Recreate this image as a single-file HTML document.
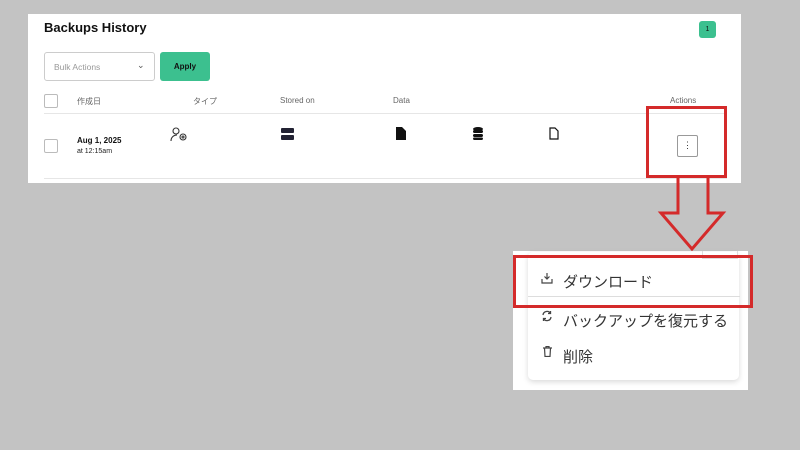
<!DOCTYPE html>
<html><head><meta charset="utf-8"><style>
*{margin:0;padding:0;box-sizing:border-box}
body{width:800px;height:450px;background:#c3c3c3;position:relative;overflow:hidden;font-family:"Liberation Sans","Noto Sans CJK JP",sans-serif}
.a{position:absolute}
.panel{left:28px;top:14px;width:713px;height:169px;background:#fff}
.cb{width:14px;height:14px;border:1px solid #bbb;border-radius:2px;background:#fff}
.hd{font-size:8px;color:#666}
</style></head><body>
<div class="a panel"></div>
<div class="a" style="left:44px;top:20px;font-size:13px;font-weight:bold;color:#111">Backups History</div>
<div class="a" style="left:699px;top:21px;width:17px;height:17px;background:#3cc08f;border-radius:3px;font-size:7px;color:#111;text-align:center;line-height:17px">1</div>
<div class="a" style="left:44px;top:52px;width:111px;height:29px;border:1px solid #ccc;border-radius:3px;font-size:8.5px;color:#999;padding:9px 0 0 9px">Bulk Actions<span class="a" style="left:92px;top:7px;color:#555;font-size:9px">⌄</span></div>
<div class="a" style="left:160px;top:52px;width:50px;height:29px;background:#3cc08f;border-radius:3px;font-size:8px;font-weight:bold;color:#111;text-align:center;line-height:29px">Apply</div>
<div class="a cb" style="left:44px;top:94px"></div>
<div class="a hd" style="left:77px;top:96px">作成日</div>
<div class="a hd" style="left:193px;top:96px">タイプ</div>
<div class="a hd" style="left:280px;top:96px">Stored on</div>
<div class="a hd" style="left:393px;top:96px">Data</div>
<div class="a hd" style="left:670px;top:96px">Actions</div>
<div class="a" style="left:44px;top:113px;width:683px;height:1px;background:#e6e6e6"></div>
<div class="a cb" style="left:44px;top:139px"></div>
<div class="a" style="left:77px;top:136px;font-size:8px;font-weight:bold;color:#111">Aug 1, 2025</div>
<div class="a" style="left:77px;top:148px;font-size:7px;color:#222">at 12:15am</div>
<svg class="a" style="left:170px;top:127px" width="18" height="15" viewBox="0 0 18 15" fill="none" stroke="#333" stroke-width="1.1"><circle cx="6" cy="4" r="3"/><path d="M1 14c0-4 3-6 6-6"/><circle cx="13" cy="10" r="3"/><circle cx="13" cy="10" r="1"/></svg>
<svg class="a" style="left:281px;top:128px" width="13" height="12" viewBox="0 0 13 12"><rect x="0" y="0" width="13" height="5" rx="1" fill="#223"/><rect x="0" y="7" width="13" height="5" rx="1" fill="#223"/></svg>
<svg class="a" style="left:396px;top:127px" width="10" height="13" viewBox="0 0 10 13"><path d="M0 0h6l4 4v9H0z" fill="#111"/></svg>
<svg class="a" style="left:473px;top:127px" width="10" height="13" viewBox="0 0 10 13" fill="#111"><ellipse cx="5" cy="2" rx="5" ry="2"/><rect x="0" y="3" width="10" height="3" rx="1.5"/><rect x="0" y="7" width="10" height="3" rx="1.5"/><rect x="0" y="10.5" width="10" height="2.5" rx="1.2"/></svg>
<svg class="a" style="left:549px;top:127px" width="10" height="13" viewBox="0 0 10 13" fill="none" stroke="#111" stroke-width="1.2"><path d="M1 1h5l3 3v8H1z"/></svg>
<div class="a" style="left:44px;top:178px;width:683px;height:1px;background:#e6e6e6"></div>
<div class="a" style="left:677px;top:135px;width:21px;height:22px;border:1px solid #999;border-radius:2px;font-size:9px;text-align:center;line-height:19px;color:#333">⋮</div>
<div class="a" style="left:646px;top:106px;width:81px;height:72px;border:3px solid #d42a2a"></div>
<svg class="a" style="left:655px;top:176px" width="75" height="78" viewBox="0 0 75 78"><path d="M23 1V37H6L37 73L68 37H53V1" fill="none" stroke="#d42a2a" stroke-width="3"/></svg>
<div class="a" style="left:513px;top:251px;width:235px;height:139px;background:#fff"></div>
<div class="a" style="left:528px;top:252px;width:211px;height:128px;background:#fff;border-radius:5px;box-shadow:0 2px 6px rgba(0,0,0,.15)"></div>
<div class="a" style="left:702px;top:251px;width:36px;height:8px;border:1px solid #ddd;border-top:none"></div>
<div class="a" style="left:528px;top:296px;width:212px;height:1px;background:#ddd"></div>
<svg class="a" style="left:541px;top:273px" width="12" height="11" viewBox="0 0 12 11" fill="none" stroke="#444" stroke-width="1.2"><path d="M6 0v6M3.5 3.5L6 6l2.5-2.5M1 6v4h10V6"/></svg>
<div class="a" style="left:563px;top:271px;font-size:15px;color:#333">ダウンロード</div>
<svg class="a" style="left:541px;top:310px" width="12" height="12" viewBox="0 0 12 12" fill="none" stroke="#444" stroke-width="1.3"><path d="M2 5a4 4 0 0 1 7.5-1.5M10 7a4 4 0 0 1-7.5 1.5M9.5 1v2.5H7M2.5 11V8.5H5"/></svg>
<div class="a" style="left:563px;top:310px;font-size:15px;color:#333">バックアップを復元する</div>
<svg class="a" style="left:543px;top:346px" width="9" height="11" viewBox="0 0 9 11" fill="none" stroke="#444" stroke-width="1.2"><path d="M0 2h9M3 2V0.5h3V2M1.5 2l0.5 8.5h5L7.5 2"/></svg>
<div class="a" style="left:563px;top:346px;font-size:15px;color:#333">削除</div>
<div class="a" style="left:513px;top:255px;width:240px;height:53px;border:3px solid #d42a2a"></div>
</body></html>
